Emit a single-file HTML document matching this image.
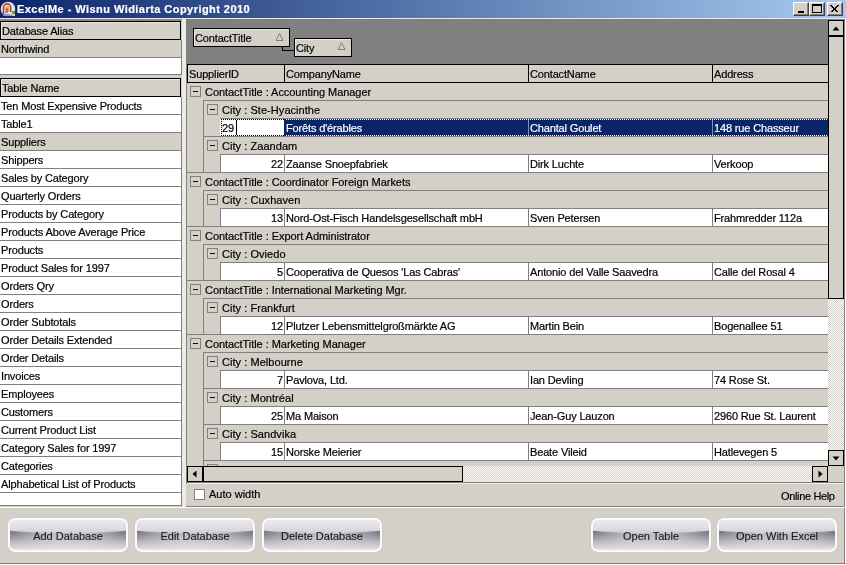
<!DOCTYPE html><html><head><meta charset="utf-8"><title>ExcelMe</title><style>
*{margin:0;padding:0;box-sizing:border-box}
html,body{width:846px;height:565px;overflow:hidden;background:#D4D0C8;font-family:"Liberation Sans",sans-serif;font-size:11px;color:#000}
.a{position:absolute}
.t{position:absolute;white-space:nowrap;line-height:13px;letter-spacing:-0.15px;will-change:transform;margin-left:-1px;-webkit-text-stroke:0.2px currentColor}
.g{letter-spacing:-0.05px}
.hl{position:absolute;height:1px;background:#808080}
.vl{position:absolute;width:1px;background:#808080}
.bk{background:#000}
.box{position:absolute;width:11px;height:11px;border:1px solid #808080;background:#D4D0C8}
.box:after{content:"";position:absolute;left:2px;top:4px;width:5px;height:1px;background:#000}
.sb{position:absolute;border:1px solid #000;background:#D4D0C8}
.chk{background-color:#D4D0C8;background-image:linear-gradient(45deg,#fff 25%,transparent 25%,transparent 75%,#fff 75%),linear-gradient(45deg,#fff 25%,transparent 25%,transparent 75%,#fff 75%);background-size:2px 2px;background-position:0 0,1px 1px}
.btn{position:absolute;width:120px;height:34px;border-radius:7px;border:2px solid #fbfbfc;overflow:hidden;
 background:linear-gradient(180deg,#e8e7ec 0,#dcdbe0 9px,#c4c3c9 12px,#bebdc3 15px,#cdccd2 22px,#dddce1 28px,#e4e3e8 30px);
 box-shadow:0 0 1px 0 #a8a6a0}
.btn:before{content:"";position:absolute;left:0;right:0;top:9px;height:20px;
 background:linear-gradient(90deg,rgba(80,78,86,.75) 0,rgba(80,78,86,.45) 12%,rgba(80,78,86,.12) 26%,rgba(80,78,86,0) 36%,rgba(80,78,86,0) 64%,rgba(80,78,86,.12) 74%,rgba(80,78,86,.45) 88%,rgba(80,78,86,.75) 100%);
 -webkit-mask-image:linear-gradient(180deg,#000 0,rgba(0,0,0,.8) 4px,rgba(0,0,0,.25) 12px,transparent 100%)}
.btn:after{content:"";position:absolute;left:-60px;right:-60px;top:-20px;height:33px;border-radius:50%;
 background:linear-gradient(180deg,#efeef2 0,#eae9ed 20px,#dedde2 28px,#d0cfd5 33px)}
.btn span{position:absolute;z-index:2;left:0;right:0;top:10px;text-align:center;line-height:13px;color:#1c1c1c;letter-spacing:0px;will-change:transform;-webkit-text-stroke:0.15px #1c1c1c}
.tb{position:absolute;top:2px;width:16px;height:14px;background:#D4D0C8;border-top:1px solid #fff;border-left:1px solid #fff;border-right:1px solid #404040;border-bottom:1px solid #404040;box-shadow:inset -1px -1px 0 #808080}
</style></head><body>
<div class="a" style="left:0;top:0;width:846px;height:18px;background:linear-gradient(90deg,#0A246A 0%,#A6CAF0 100%)"></div>
<svg class="a" style="left:0;top:1px" width="16" height="16" viewBox="0 0 16 16">
<circle cx="8" cy="8" r="7.3" fill="#d8d8e4"/><circle cx="7.6" cy="7.4" r="6" fill="#f0eef2"/>
<path d="M3.5 13 V6.5 A3.6 3.6 0 0 1 10.7 6.5 V11" fill="none" stroke="#a8401c" stroke-width="1.6"/>
<path d="M5.8 12.5 V7.2 A1.5 1.5 0 0 1 8.8 7.2 V11" fill="none" stroke="#e2a060" stroke-width="1.4"/>
<path d="M7 7 V12" stroke="#5a2008" stroke-width="1"/>
<rect x="3" y="13" width="7" height="2" fill="#8890d0"/>
<rect x="12" y="10" width="3" height="3" fill="#6aa040"/><rect x="12" y="13" width="3" height="2" fill="#e8d070"/></svg>
<div class="t" style="left:18px;top:3px;color:#fff;font-weight:bold;font-size:11px;letter-spacing:0.45px;line-height:13px">ExcelMe - Wisnu Widiarta Copyright 2010</div>
<div class="tb" style="left:793px"><div class="a bk" style="left:4px;top:8px;width:6px;height:2px"></div></div>
<div class="tb" style="left:809px"><div class="a" style="left:2px;top:1px;width:10px;height:9px;border:1px solid #000;border-top-width:2px"></div></div>
<div class="tb" style="left:827px"><svg class="a" style="left:2px;top:2px" width="9" height="8" viewBox="0 0 9 8"><path d="M0.5 0.5 L7.5 7.5 M1.5 0.5 L8.5 7.5 M7.5 0.5 L0.5 7.5 M8.5 0.5 L1.5 7.5" stroke="#000" stroke-width="1" shape-rendering="crispEdges"/></svg></div>
<div class="a" style="left:0;top:18px;width:846px;height:1px;background:#ECEAE6"></div>
<div class="a" style="left:0;top:19px;width:182px;height:2px;background:#8c8884"></div>
<div class="a" style="left:182px;top:19px;width:4px;height:488px;background:#EDEBE7"></div>
<div class="a" style="left:0;top:40px;width:181px;height:35px;background:#fff"></div>
<div class="a" style="left:0px;top:21px;width:181px;height:19px;border:1px solid #000;background:#D4D0C8;box-shadow:inset 1px 1px 0 #EAE8E4"></div>
<div class="t" style="left:3px;top:25px">Database Alias</div>
<div class="a" style="left:0;top:40px;width:181px;height:17px;background:#D4D0C8"></div>
<div class="t" style="left:2px;top:43px">Northwind</div>
<div class="hl" style="left:0;top:57px;width:181px"></div>
<div class="hl" style="left:0;top:74px;width:182px"></div>
<div class="vl" style="left:181px;top:40px;height:35px"></div>
<div class="a" style="left:0px;top:78px;width:181px;height:19px;border:1px solid #000;background:#D4D0C8;box-shadow:inset 1px 1px 0 #EAE8E4"></div>
<div class="t" style="left:3px;top:82px">Table Name</div>
<div class="a" style="left:0;top:97px;width:181px;height:409px;background:#fff"></div>
<div class="t" style="left:2px;top:100px">Ten Most Expensive Products</div>
<div class="hl" style="left:0;top:114px;width:181px"></div>
<div class="t" style="left:2px;top:118px">Table1</div>
<div class="hl" style="left:0;top:132px;width:181px"></div>
<div class="a" style="left:0;top:133px;width:181px;height:17px;background:#D4D0C8"></div>
<div class="t" style="left:2px;top:136px">Suppliers</div>
<div class="hl" style="left:0;top:150px;width:181px"></div>
<div class="t" style="left:2px;top:154px">Shippers</div>
<div class="hl" style="left:0;top:168px;width:181px"></div>
<div class="t" style="left:2px;top:172px">Sales by Category</div>
<div class="hl" style="left:0;top:186px;width:181px"></div>
<div class="t" style="left:2px;top:190px">Quarterly Orders</div>
<div class="hl" style="left:0;top:204px;width:181px"></div>
<div class="t" style="left:2px;top:208px">Products by Category</div>
<div class="hl" style="left:0;top:222px;width:181px"></div>
<div class="t" style="left:2px;top:226px">Products Above Average Price</div>
<div class="hl" style="left:0;top:240px;width:181px"></div>
<div class="t" style="left:2px;top:244px">Products</div>
<div class="hl" style="left:0;top:258px;width:181px"></div>
<div class="t" style="left:2px;top:262px">Product Sales for 1997</div>
<div class="hl" style="left:0;top:276px;width:181px"></div>
<div class="t" style="left:2px;top:280px">Orders Qry</div>
<div class="hl" style="left:0;top:294px;width:181px"></div>
<div class="t" style="left:2px;top:298px">Orders</div>
<div class="hl" style="left:0;top:312px;width:181px"></div>
<div class="t" style="left:2px;top:316px">Order Subtotals</div>
<div class="hl" style="left:0;top:330px;width:181px"></div>
<div class="t" style="left:2px;top:334px">Order Details Extended</div>
<div class="hl" style="left:0;top:348px;width:181px"></div>
<div class="t" style="left:2px;top:352px">Order Details</div>
<div class="hl" style="left:0;top:366px;width:181px"></div>
<div class="t" style="left:2px;top:370px">Invoices</div>
<div class="hl" style="left:0;top:384px;width:181px"></div>
<div class="t" style="left:2px;top:388px">Employees</div>
<div class="hl" style="left:0;top:402px;width:181px"></div>
<div class="t" style="left:2px;top:406px">Customers</div>
<div class="hl" style="left:0;top:420px;width:181px"></div>
<div class="t" style="left:2px;top:424px">Current Product List</div>
<div class="hl" style="left:0;top:438px;width:181px"></div>
<div class="t" style="left:2px;top:442px">Category Sales for 1997</div>
<div class="hl" style="left:0;top:456px;width:181px"></div>
<div class="t" style="left:2px;top:460px">Categories</div>
<div class="hl" style="left:0;top:474px;width:181px"></div>
<div class="t" style="left:2px;top:478px">Alphabetical List of Products</div>
<div class="hl" style="left:0;top:492px;width:181px"></div>
<div class="hl" style="left:0;top:505px;width:182px"></div>
<div class="vl" style="left:181px;top:97px;height:409px"></div>
<div class="vl" style="left:186px;top:19px;height:465px"></div>
<div class="a" style="left:187px;top:19px;width:641px;height:45px;background:#808080"></div>
<div class="a" style="left:193px;top:28px;width:97px;height:19px;border:1px solid #000;background:#D4D0C8;box-shadow:inset 1px 1px 0 #EAE8E4"></div>
<div class="t" style="left:196px;top:32px">ContactTitle</div>
<svg class="a" style="left:276px;top:33px" width="8" height="8" viewBox="0 0 8 8"><path d="M3.5 0.5 L7 7.5 L0 7.5 Z" fill="none" stroke="#808080" stroke-width="1"/></svg>
<div class="a bk" style="left:282px;top:47px;width:1px;height:4px"></div>
<div class="a bk" style="left:282px;top:50px;width:12px;height:1px"></div>
<div class="a" style="left:294px;top:38px;width:58px;height:19px;border:1px solid #000;background:#D4D0C8;box-shadow:inset 1px 1px 0 #EAE8E4"></div>
<div class="t" style="left:297px;top:42px">City</div>
<svg class="a" style="left:338px;top:42px" width="8" height="8" viewBox="0 0 8 8"><path d="M3.5 0.5 L7 7.5 L0 7.5 Z" fill="none" stroke="#808080" stroke-width="1"/></svg>
<div class="a" style="left:187px;top:64px;width:642px;height:19px;border:1px solid #000;background:#D4D0C8"></div>
<div class="t" style="left:190px;top:68px">SupplierID</div>
<div class="a bk" style="left:284px;top:64px;width:1px;height:19px"></div>
<div class="t" style="left:287px;top:68px">CompanyName</div>
<div class="a bk" style="left:528px;top:64px;width:1px;height:19px"></div>
<div class="t" style="left:531px;top:68px">ContactName</div>
<div class="a bk" style="left:712px;top:64px;width:1px;height:19px"></div>
<div class="t" style="left:715px;top:68px">Address</div>
<div class="a" style="left:187px;top:83px;width:641px;height:383px;background:#D4D0C8;overflow:hidden">
<div class="box" style="left:3px;top:3px"></div>
<div class="t g" style="left:19px;top:3px">ContactTitle : Accounting Manager</div>
<div class="hl" style="left:16px;top:17px;width:630px"></div>
<div class="vl" style="left:16px;top:18px;height:18px"></div>
<div class="box" style="left:20px;top:21px"></div>
<div class="t g" style="left:36px;top:21px;letter-spacing:0.05px">City : Ste-Hyacinthe</div>
<div class="hl" style="left:33px;top:35px;width:630px"></div>
<div class="vl" style="left:16px;top:36px;height:18px"></div>
<div class="a" style="left:33px;top:36px;width:64px;height:17px;background:#fff"></div>
<div class="a" style="left:97px;top:36px;width:544px;height:17px;background:#0A246A"></div>
<div class="a" style="left:33px;top:36px;width:64px;height:1px;background-image:repeating-linear-gradient(90deg,#fff 0,#fff 1px,#000 1px,#000 2px)"></div>
<div class="a" style="left:33px;top:52px;width:64px;height:1px;background-image:repeating-linear-gradient(90deg,#fff 0,#fff 1px,#000 1px,#000 2px)"></div>
<div class="a" style="left:97px;top:36px;width:544px;height:1px;background-image:repeating-linear-gradient(90deg,#fff 0,#fff 1px,#0A246A 1px,#0A246A 2px)"></div>
<div class="a" style="left:97px;top:52px;width:544px;height:1px;background-image:repeating-linear-gradient(90deg,#fff 0,#fff 1px,#0A246A 1px,#0A246A 2px)"></div>
<div class="a" style="left:34px;top:36px;width:1px;height:17px;background-image:repeating-linear-gradient(180deg,#000 0,#000 1px,#fff 1px,#fff 2px)"></div>
<div class="a" style="left:97px;top:36px;width:1px;height:17px;background:#0A246A"></div>
<div class="a" style="left:341px;top:37px;width:1px;height:15px;background:#8090b8"></div>
<div class="a" style="left:525px;top:37px;width:1px;height:15px;background:#8090b8"></div>
<div class="t" style="left:36px;top:39px">29</div>
<div class="a bk" style="left:49px;top:37px;width:1px;height:15px"></div>
<div class="t" style="left:100px;top:39px;color:#fff">Forêts d'érables</div>
<div class="t" style="left:344px;top:39px;color:#fff">Chantal Goulet</div>
<div class="t" style="left:528px;top:39px;color:#fff">148 rue Chasseur</div>
<div class="hl" style="left:17px;top:53px;width:641px"></div>
<div class="vl" style="left:16px;top:54px;height:18px"></div>
<div class="box" style="left:20px;top:57px"></div>
<div class="t g" style="left:36px;top:57px;letter-spacing:0.05px">City : Zaandam</div>
<div class="hl" style="left:33px;top:71px;width:630px"></div>
<div class="vl" style="left:16px;top:72px;height:18px"></div>
<div class="a" style="left:33px;top:72px;width:608px;height:17px;background:#fff"></div>
<div class="vl" style="left:33px;top:72px;height:18px"></div>
<div class="vl" style="left:97px;top:72px;height:18px"></div>
<div class="vl" style="left:341px;top:72px;height:18px"></div>
<div class="vl" style="left:525px;top:72px;height:18px"></div>
<div class="t" style="left:33px;width:64px;text-align:right;top:75px">22</div>
<div class="t" style="left:100px;top:75px">Zaanse Snoepfabriek</div>
<div class="t" style="left:344px;top:75px">Dirk Luchte</div>
<div class="t" style="left:528px;top:75px">Verkoop</div>
<div class="hl" style="left:0px;top:89px;width:641px"></div>
<div class="box" style="left:3px;top:93px"></div>
<div class="t g" style="left:19px;top:93px">ContactTitle : Coordinator Foreign Markets</div>
<div class="hl" style="left:16px;top:107px;width:630px"></div>
<div class="vl" style="left:16px;top:108px;height:18px"></div>
<div class="box" style="left:20px;top:111px"></div>
<div class="t g" style="left:36px;top:111px;letter-spacing:0.05px">City : Cuxhaven</div>
<div class="hl" style="left:33px;top:125px;width:630px"></div>
<div class="vl" style="left:16px;top:126px;height:18px"></div>
<div class="a" style="left:33px;top:126px;width:608px;height:17px;background:#fff"></div>
<div class="vl" style="left:33px;top:126px;height:18px"></div>
<div class="vl" style="left:97px;top:126px;height:18px"></div>
<div class="vl" style="left:341px;top:126px;height:18px"></div>
<div class="vl" style="left:525px;top:126px;height:18px"></div>
<div class="t" style="left:33px;width:64px;text-align:right;top:129px">13</div>
<div class="t" style="left:100px;top:129px">Nord-Ost-Fisch Handelsgesellschaft mbH</div>
<div class="t" style="left:344px;top:129px">Sven Petersen</div>
<div class="t" style="left:528px;top:129px">Frahmredder 112a</div>
<div class="hl" style="left:0px;top:143px;width:641px"></div>
<div class="box" style="left:3px;top:147px"></div>
<div class="t g" style="left:19px;top:147px">ContactTitle : Export Administrator</div>
<div class="hl" style="left:16px;top:161px;width:630px"></div>
<div class="vl" style="left:16px;top:162px;height:18px"></div>
<div class="box" style="left:20px;top:165px"></div>
<div class="t g" style="left:36px;top:165px;letter-spacing:0.05px">City : Oviedo</div>
<div class="hl" style="left:33px;top:179px;width:630px"></div>
<div class="vl" style="left:16px;top:180px;height:18px"></div>
<div class="a" style="left:33px;top:180px;width:608px;height:17px;background:#fff"></div>
<div class="vl" style="left:33px;top:180px;height:18px"></div>
<div class="vl" style="left:97px;top:180px;height:18px"></div>
<div class="vl" style="left:341px;top:180px;height:18px"></div>
<div class="vl" style="left:525px;top:180px;height:18px"></div>
<div class="t" style="left:33px;width:64px;text-align:right;top:183px">5</div>
<div class="t" style="left:100px;top:183px">Cooperativa de Quesos 'Las Cabras'</div>
<div class="t" style="left:344px;top:183px">Antonio del Valle Saavedra</div>
<div class="t" style="left:528px;top:183px">Calle del Rosal 4</div>
<div class="hl" style="left:0px;top:197px;width:641px"></div>
<div class="box" style="left:3px;top:201px"></div>
<div class="t g" style="left:19px;top:201px">ContactTitle : International Marketing Mgr.</div>
<div class="hl" style="left:16px;top:215px;width:630px"></div>
<div class="vl" style="left:16px;top:216px;height:18px"></div>
<div class="box" style="left:20px;top:219px"></div>
<div class="t g" style="left:36px;top:219px;letter-spacing:0.05px">City : Frankfurt</div>
<div class="hl" style="left:33px;top:233px;width:630px"></div>
<div class="vl" style="left:16px;top:234px;height:18px"></div>
<div class="a" style="left:33px;top:234px;width:608px;height:17px;background:#fff"></div>
<div class="vl" style="left:33px;top:234px;height:18px"></div>
<div class="vl" style="left:97px;top:234px;height:18px"></div>
<div class="vl" style="left:341px;top:234px;height:18px"></div>
<div class="vl" style="left:525px;top:234px;height:18px"></div>
<div class="t" style="left:33px;width:64px;text-align:right;top:237px">12</div>
<div class="t" style="left:100px;top:237px">Plutzer Lebensmittelgroßmärkte AG</div>
<div class="t" style="left:344px;top:237px">Martin Bein</div>
<div class="t" style="left:528px;top:237px">Bogenallee 51</div>
<div class="hl" style="left:0px;top:251px;width:641px"></div>
<div class="box" style="left:3px;top:255px"></div>
<div class="t g" style="left:19px;top:255px">ContactTitle : Marketing Manager</div>
<div class="hl" style="left:16px;top:269px;width:630px"></div>
<div class="vl" style="left:16px;top:270px;height:18px"></div>
<div class="box" style="left:20px;top:273px"></div>
<div class="t g" style="left:36px;top:273px;letter-spacing:0.05px">City : Melbourne</div>
<div class="hl" style="left:33px;top:287px;width:630px"></div>
<div class="vl" style="left:16px;top:288px;height:18px"></div>
<div class="a" style="left:33px;top:288px;width:608px;height:17px;background:#fff"></div>
<div class="vl" style="left:33px;top:288px;height:18px"></div>
<div class="vl" style="left:97px;top:288px;height:18px"></div>
<div class="vl" style="left:341px;top:288px;height:18px"></div>
<div class="vl" style="left:525px;top:288px;height:18px"></div>
<div class="t" style="left:33px;width:64px;text-align:right;top:291px">7</div>
<div class="t" style="left:100px;top:291px">Pavlova, Ltd.</div>
<div class="t" style="left:344px;top:291px">Ian Devling</div>
<div class="t" style="left:528px;top:291px">74 Rose St.</div>
<div class="hl" style="left:17px;top:305px;width:641px"></div>
<div class="vl" style="left:16px;top:306px;height:18px"></div>
<div class="box" style="left:20px;top:309px"></div>
<div class="t g" style="left:36px;top:309px;letter-spacing:0.05px">City : Montréal</div>
<div class="hl" style="left:33px;top:323px;width:630px"></div>
<div class="vl" style="left:16px;top:324px;height:18px"></div>
<div class="a" style="left:33px;top:324px;width:608px;height:17px;background:#fff"></div>
<div class="vl" style="left:33px;top:324px;height:18px"></div>
<div class="vl" style="left:97px;top:324px;height:18px"></div>
<div class="vl" style="left:341px;top:324px;height:18px"></div>
<div class="vl" style="left:525px;top:324px;height:18px"></div>
<div class="t" style="left:33px;width:64px;text-align:right;top:327px">25</div>
<div class="t" style="left:100px;top:327px">Ma Maison</div>
<div class="t" style="left:344px;top:327px">Jean-Guy Lauzon</div>
<div class="t" style="left:528px;top:327px">2960 Rue St. Laurent</div>
<div class="hl" style="left:17px;top:341px;width:641px"></div>
<div class="vl" style="left:16px;top:342px;height:18px"></div>
<div class="box" style="left:20px;top:345px"></div>
<div class="t g" style="left:36px;top:345px;letter-spacing:0.05px">City : Sandvika</div>
<div class="hl" style="left:33px;top:359px;width:630px"></div>
<div class="vl" style="left:16px;top:360px;height:18px"></div>
<div class="a" style="left:33px;top:360px;width:608px;height:17px;background:#fff"></div>
<div class="vl" style="left:33px;top:360px;height:18px"></div>
<div class="vl" style="left:97px;top:360px;height:18px"></div>
<div class="vl" style="left:341px;top:360px;height:18px"></div>
<div class="vl" style="left:525px;top:360px;height:18px"></div>
<div class="t" style="left:33px;width:64px;text-align:right;top:363px">15</div>
<div class="t" style="left:100px;top:363px">Norske Meierier</div>
<div class="t" style="left:344px;top:363px">Beate Vileid</div>
<div class="t" style="left:528px;top:363px">Hatlevegen 5</div>
<div class="hl" style="left:17px;top:377px;width:641px"></div>
<div class="vl" style="left:16px;top:378px;height:18px"></div>
<div class="box" style="left:20px;top:381px"></div>
<div class="t g" style="left:36px;top:381px;letter-spacing:0.05px">City : Sao Paulo</div>
<div class="hl" style="left:0px;top:395px;width:630px"></div>
</div>
<div class="a" style="left:828px;top:19px;width:16px;height:1px;background:#808080"></div>
<div class="a chk" style="left:828px;top:20px;width:16px;height:446px"></div>
<div class="sb" style="left:828px;top:20px;width:16px;height:16px"><svg class="a" style="left:3px;top:5px" width="8" height="5" viewBox="0 0 8 5"><path d="M4 0.5 L7.5 4.5 L0.5 4.5Z" fill="#000"/></svg></div>
<div class="sb" style="left:828px;top:36px;width:16px;height:263px"></div>
<div class="sb" style="left:828px;top:450px;width:16px;height:16px"><svg class="a" style="left:3px;top:5px" width="8" height="5" viewBox="0 0 8 5"><path d="M0.5 0.5 L7.5 0.5 L4 4.5Z" fill="#000"/></svg></div>
<div class="a" style="left:828px;top:466px;width:16px;height:16px;background:#D4D0C8"></div>
<div class="vl" style="left:844px;top:19px;height:545px"></div>
<div class="a" style="left:845px;top:19px;width:1px;height:546px;background:#fff"></div>
<div class="a chk" style="left:187px;top:466px;width:641px;height:16px"></div>
<div class="sb" style="left:187px;top:466px;width:16px;height:16px"><svg class="a" style="left:4px;top:3px" width="5" height="8" viewBox="0 0 5 8"><path d="M0.5 4 L4.5 0.5 L4.5 7.5Z" fill="#000"/></svg></div>
<div class="sb" style="left:203px;top:466px;width:260px;height:16px"></div>
<div class="sb" style="left:812px;top:466px;width:16px;height:16px"><svg class="a" style="left:5px;top:3px" width="5" height="8" viewBox="0 0 5 8"><path d="M0.5 0.5 L4.5 4 L0.5 7.5Z" fill="#000"/></svg></div>
<div class="hl" style="left:186px;top:482px;width:659px"></div>
<div class="a" style="left:187px;top:483px;width:657px;height:1px;background:#F0EEEA"></div>
<div class="a" style="left:194px;top:489px;width:11px;height:11px;border:1px solid #808080;background:#fff"></div>
<div class="t" style="left:210px;top:488px;letter-spacing:0">Auto width</div>
<div class="t" style="left:782px;top:490px;letter-spacing:-0.35px">Online Help</div>
<div class="hl" style="left:186px;top:506px;width:659px"></div>
<div class="a" style="left:0;top:507px;width:845px;height:1px;background:#fff"></div>
<div class="hl" style="left:0;top:563px;width:846px"></div>
<div class="a" style="left:0;top:564px;width:846px;height:1px;background:#fff"></div>
<div class="btn" style="left:8px;top:518px"><span>Add Database</span></div>
<div class="btn" style="left:135px;top:518px"><span>Edit Database</span></div>
<div class="btn" style="left:262px;top:518px"><span>Delete Database</span></div>
<div class="btn" style="left:591px;top:518px"><span>Open Table</span></div>
<div class="btn" style="left:717px;top:518px"><span>Open With Excel</span></div>
</body></html>
